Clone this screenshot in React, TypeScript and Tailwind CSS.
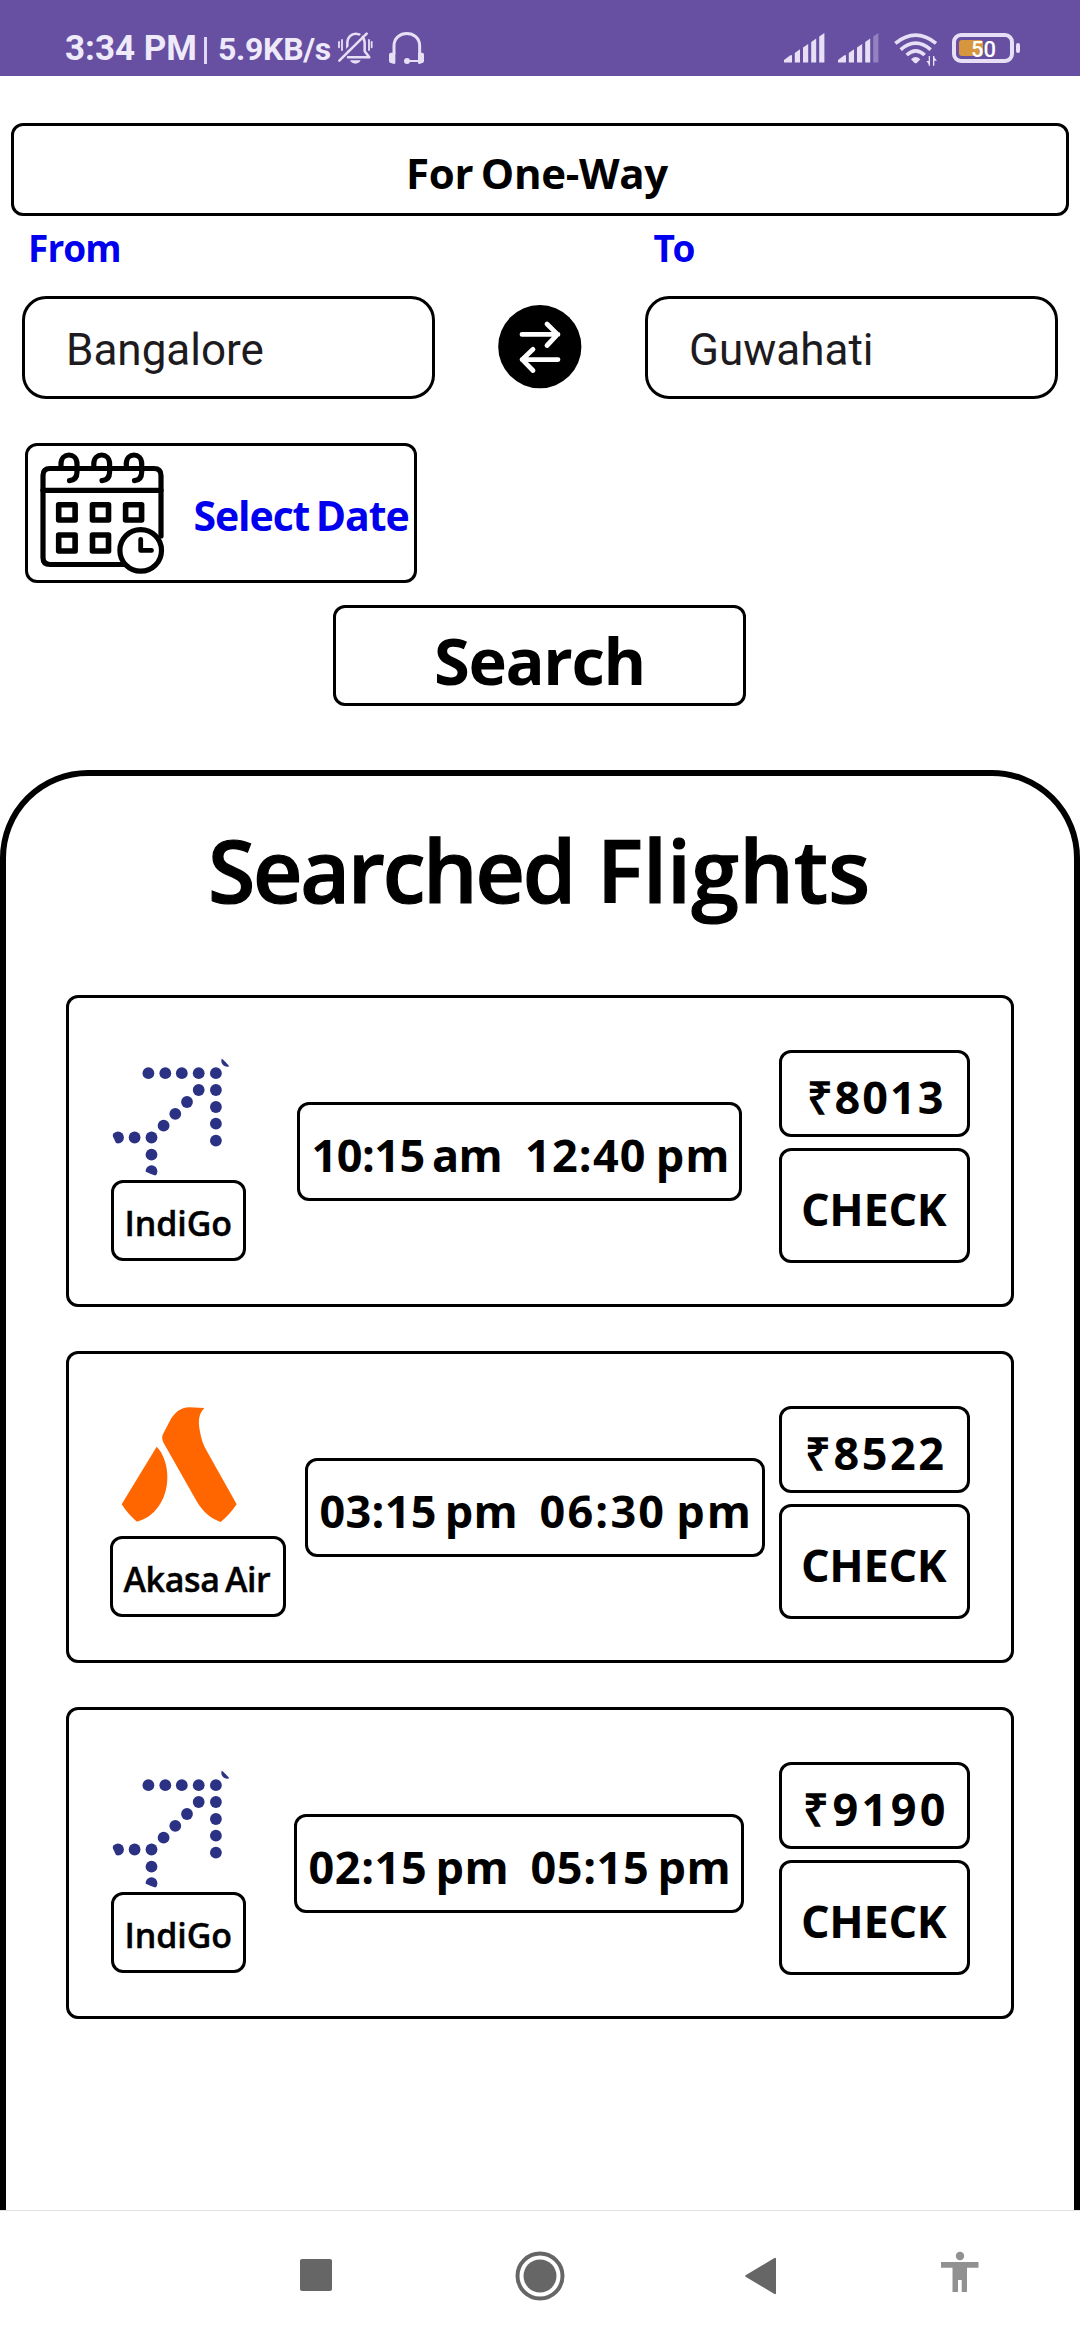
import React from "react";

type Flight = {
  airline: string;
  logo: React.ReactNode;
  nameClass: string;
  depart: string;
  departClass: string;
  arrive: string;
  arriveClass: string;
  boxClass: string;
  price: string;
  priceClass: string;
};

function IndigoLogo() {
  const dots = [
    [148.4, 1073.2], [165.3, 1073.2], [181.8, 1073.2], [198.7, 1073.2], [215.9, 1073.2],
    [215.9, 1090], [215.9, 1107], [215.9, 1123.7], [215.9, 1140.6],
    [198.7, 1090], [187, 1102], [175.3, 1113.8], [163.6, 1125.7], [151.5, 1137.5],
    [134.6, 1137.5], [118, 1137.5], [151.5, 1154.7], [151.5, 1171.2], [227.2, 1060.8],
  ];
  return (
    <svg className="h-[138px] w-[138px]" viewBox="107 1042 138 138">
      <clipPath id="round">
        <circle cx="176.6" cy="1110.3" r="68.8" />
      </clipPath>
      <g clipPath="url(#round)" fill="#2b3284">
        {dots.map(([x, y]) => (
          <circle key={`${x}-${y}`} cx={x} cy={y} r="5.9" />
        ))}
      </g>
    </svg>
  );
}

function AkasaLogo() {
  return (
    <svg className="h-[138px] w-[138px]" viewBox="141 174 414 414" fill="#ff6600">
      <path d="M308 284 L328 246 C342 218 362 202 388 202 L433 204 C417 222 413 240 420 275 C424 298 430 315 440 332 L530 493 Q510 523 482 546 C452 536 428 515 410 484 L314 314 Q303 297 308 284Z" />
      <path d="M290 320 C310 340 322 375 322 412 C322 478 284 532 231 545 Q204 523 185 493Z" />
    </svg>
  );
}

const flights: Flight[] = [
  {
    airline: "IndiGo",
    logo: <IndigoLogo />,
    nameClass: "ml-1 w-[135px] tracking-[-0.1px]",
    depart: "10:15 am",
    departClass: "w-[213.5px] tracking-[-0.5px]",
    arrive: "12:40 pm",
    arriveClass: "tracking-[1.2px]",
    boxClass: "ml-[51px] w-[445px]",
    price: "₹8013",
    priceClass: "pl-[24.5px] tracking-[2px]",
  },
  {
    airline: "Akasa Air",
    logo: <AkasaLogo />,
    nameClass: "ml-[3px] w-[176px] tracking-[-0.4px]",
    depart: "03:15 pm",
    departClass: "w-[220px] tracking-[0.3px]",
    arrive: "06:30 pm",
    arriveClass: "tracking-[2.2px]",
    boxClass: "ml-[19px] w-[460px]",
    price: "₹8522",
    priceClass: "pl-[23px] tracking-[2.5px]",
  },
  {
    airline: "IndiGo",
    logo: <IndigoLogo />,
    nameClass: "ml-1 w-[135px] tracking-[-0.1px]",
    depart: "02:15 pm",
    departClass: "w-[222px] tracking-[0.6px]",
    arrive: "05:15 pm",
    arriveClass: "tracking-[0.6px]",
    boxClass: "ml-[48px] w-[450px]",
    price: "₹9190",
    priceClass: "pl-[21px] tracking-[3.4px]",
  },
];

function SignalBars({ weak = false }: { weak?: boolean }) {
  return (
    <svg className="h-[30px] w-[41px]" viewBox="0 0 41 30" fill="#e6dff5">
      <path d="M0 29.5V27L6 22.5Q8 21.5 8 23V29.5Z" />
      <path d="M10.8 29.5V20L16 16.3V29.5Z" />
      <path d="M19 29.5V14.5L24.2 11V29.5Z" />
      <path d="M27.2 29.5V9L32.2 5.5V29.5Z" />
      <path d="M35.2 29.5V3.5L40.4 0V29.5Z" opacity={weak ? 0.35 : 1} />
    </svg>
  );
}

function StatusBar() {
  return (
    <header className="flex h-[76px] items-start bg-[#6750a2] font-['Roboto',sans-serif] text-[#efeafa]">
      <span className="mt-[31px] ml-[65px] w-[137px] text-[35px] leading-none font-bold whitespace-nowrap">3:34 PM</span>
      <span className="mt-[37px] ml-[2px] h-[27px] w-[3px] bg-[#e0d8f2]" />
      <span className="mt-[33px] ml-[11px] w-[120px] text-[32px] leading-none font-bold tracking-[-0.3px] whitespace-nowrap">5.9KB/s</span>
      <svg className="mt-[31px] h-[34px] w-[36px]" viewBox="26 33 108 102" fill="none" stroke="#e6dff5" strokeWidth="7.5" strokeLinecap="round" strokeLinejoin="round">
        <path d="M54 92V70C54 32 104 32 106 68V94L120 112H56" />
        <path d="M29 66V82M38 60V90M119 60V90M127 66V82" strokeWidth="5.5" />
        <path d="M26 116L106 36" stroke="#6750a2" strokeWidth="7" />
        <path d="M30 122L112 41" />
        <path d="M62 121H94Q89 131 78 131Q67 131 62 121Z" fill="#e6dff5" stroke="none" />
      </svg>
      <svg className="mt-[31px] ml-[14px] h-[34px] w-[37px]" viewBox="174 33 111 102" fill="none" stroke="#e6dff5" strokeWidth="9">
        <path d="M192 102V78C192 28 269 28 269 78V102" />
        <path d="M182 98H196V130Q193 133 190 131L180 128Q177 126 177 122V104Q177 99 182 98Z" fill="#e6dff5" stroke="none" />
        <path d="M278 98H264V130Q267 133 270 131L279 128Q282 126 282 122V104Q282 99 278 98Z" fill="#e6dff5" stroke="none" />
        <path d="M232 123H268" strokeWidth="6" />
        <circle cx="231" cy="123" r="9" fill="#e6dff5" stroke="none" />
      </svg>
      <div className="mt-[33px] mr-[60px] ml-auto flex items-start">
        <SignalBars />
        <div className="w-[13px]" />
        <SignalBars weak />
        <svg className="-mt-px ml-[15px] h-[36px] w-[45px]" viewBox="40 36 135 108" fill="none" stroke="#e6dff5" strokeWidth="11">
          <path d="M44 70Q105 21 166 70" />
          <path d="M60 89Q105 50 150 89" />
          <path d="M78 105Q105 80 132 105" />
          <path d="M91 118Q105 104 119 118L109 128Q105 131 101 128Z" fill="#e6dff5" stroke="none" />
          <path d="M146 108V137M159 137V108" strokeWidth="4" />
          <path d="M137 123L148 137V123ZM157 108L169 122H157Z" fill="#e6dff5" stroke="none" />
        </svg>
        <div className="relative ml-[13px] h-[30px] w-[62px] rounded-[9px] border-4 border-[#e6dff5] p-[3px]">
          <div className="h-[16px] w-[24px] rounded-[3px] bg-[#d8963c]" />
          <span className="absolute top-0 left-[15px] text-[22px] leading-[25px] font-medium text-white">50</span>
        </div>
        <div className="mt-[10px] ml-[2px] h-[10px] w-[4px] rounded-[2px] bg-[#e6dff5]" />
      </div>
    </header>
  );
}

function SwapIcon() {
  return (
    <svg className="h-[84px] w-[84px]" viewBox="498 305 84 84" fill="none" stroke="#fff" strokeWidth="4.8" strokeLinecap="round" strokeLinejoin="round">
      <circle cx="539.8" cy="346.7" r="41.6" fill="#000" stroke="none" />
      <path d="M522 334.4H558M547 324L557.5 334.4L547 345.5M558 359.6H522M533 349.3L522.3 359.6L533 370.5" />
    </svg>
  );
}

function CalendarIcon() {
  return (
    <svg className="h-[126px] w-[126px]" viewBox="39 450 126 126" fill="none" stroke="#000" strokeWidth="5.2" strokeLinecap="round" strokeLinejoin="round">
      <path d="M125 564.5H50Q43 564.5 43 557.5V475.5Q43 468.5 50 468.5H154Q161 468.5 161 475.5V536" />
      <path d="M43 490.3H161" />
      <path d="M61 468V464C61 452 77 452 77 464V472Q77 480 69.5 480.7" />
      <path d="M93.8 468V464C93.8 452 109.6 452 109.6 464V472Q109.6 480 102 480.7" />
      <path d="M126.3 468V464C126.3 452 141.7 452 141.7 464V472Q141.7 480 134.5 480.7" />
      <g strokeWidth="5.6">
        <rect x="58.7" y="504.8" width="16.4" height="15.2" />
        <rect x="92.5" y="504.8" width="16" height="15.2" />
        <rect x="125.6" y="504.8" width="16" height="15.2" />
        <rect x="58.7" y="535" width="16.4" height="16" />
        <rect x="92.5" y="535" width="16" height="16" />
      </g>
      <circle cx="140.7" cy="550.4" r="20.8" fill="#fff" />
      <path d="M140.7 539.5V550.4H151.5" strokeWidth="4.8" />
    </svg>
  );
}

function FlightCard({ f }: { f: Flight }) {
  return (
    <article className="flex h-[312px] items-start rounded-[12px] border-[3px] border-black pr-[41px] pl-[38px]">
      <div className="mt-[44px] flex flex-col items-start">
        {f.logo}
        <div className={`h-[81px] rounded-[12px] border-[3px] border-black pt-[23px] pl-[10.5px] text-[34px] leading-none font-semibold whitespace-nowrap [-webkit-text-stroke:0.4px_black] [word-spacing:-3px] ${f.nameClass}`}>{f.airline}</div>
      </div>
      <div className={`mt-[104px] flex h-[99px] items-start rounded-[12px] border-[3px] border-black pt-[27px] pl-[11.5px] text-[45px] leading-none whitespace-nowrap [word-spacing:-4px] ${f.boxClass}`}>
        <span className={`shrink-0 ${f.departClass}`}>{f.depart}</span>
        <span className={f.arriveClass}>{f.arrive}</span>
      </div>
      <div className="mt-[52px] ml-auto flex w-[191px] flex-col gap-[11px] text-[45px] leading-none whitespace-nowrap">
        <div className={`h-[87px] rounded-[12px] border-[3px] border-black pt-[20.5px] ${f.priceClass}`}>{f.price}</div>
        <button className="flex h-[115px] items-start rounded-[12px] border-[3px] border-black pt-[35px] pl-[19px] tracking-[-0.3px]">CHECK</button>
      </div>
    </article>
  );
}

function NavBar() {
  return (
    <nav className="flex h-[130px] items-start border-t border-[#e2e2e2] bg-white">
      <div className="mt-[48px] ml-[300px] h-[32px] w-[32px] rounded-[2px] bg-[#666]" />
      <svg className="mt-[40px] ml-[183px] h-[50px] w-[50px]" viewBox="0 0 50 50">
        <circle cx="25" cy="25" r="22.5" fill="none" stroke="#666" strokeWidth="4" />
        <circle cx="25" cy="25" r="16.5" fill="#666" />
      </svg>
      <svg className="mt-[46px] ml-[180px] h-[38px] w-[31px]" viewBox="0 0 31 38">
        <path d="M29 1.2Q31 0 31 2V36Q31 38 29 36.8L1 20Q-.5 19 1 18Z" fill="#666" />
      </svg>
      <svg className="mt-[40px] ml-[165px] h-[42px] w-[38px]" viewBox="0 0 38 42" fill="#919191">
        <circle cx="19" cy="5" r="4.2" />
        <path d="M0 11H37.5V16.7H26V41H20.7V29H17V41H11.5V16.7H0Z" />
      </svg>
    </nav>
  );
}

export default function App() {
  return (
    <div className="flex h-[2340px] w-[1080px] flex-col overflow-hidden bg-white font-['Open_Sans',sans-serif] font-bold text-black">
      <StatusBar />
      <main className="flex h-[2134px] flex-col overflow-hidden pt-[47px]">
        <div className="mx-[11px] h-[93px] shrink-0 rounded-[12px] border-[3px] border-black pt-[26px] pl-[392px] text-[42px] leading-none tracking-[-0.3px] whitespace-nowrap [word-spacing:-3px]">For One-Way</div>
        <div className="mt-[13px] flex shrink-0 pl-[28px] text-[37px] leading-none text-[#0000ee]">
          <span className="w-[625.5px] tracking-[-0.9px]">From</span>
          <span className="tracking-[-2.5px]">To</span>
        </div>
        <div className="mt-[30px] flex shrink-0 items-start justify-between px-[22px] font-['Roboto',sans-serif] text-[44px] leading-none font-normal text-[#1d1b20]">
          <div className="h-[103px] w-[413px] rounded-[24px] border-[3px] border-black pt-[29px] pl-[41px]">Bangalore</div>
          <div className="pt-[9px]"><SwapIcon /></div>
          <div className="h-[103px] w-[413px] rounded-[24px] border-[3px] border-black pt-[29px] pl-[41px]">Guwahati</div>
        </div>
        <div className="mt-[44px] ml-[25px] flex h-[140px] w-[392px] shrink-0 items-start rounded-[12px] border-[3px] border-black pt-[4px] pl-[11px]">
          <CalendarIcon />
          <span className="mt-[45px] ml-[28.5px] text-[41px] leading-none tracking-[-1.1px] whitespace-nowrap text-[#0000ee] [word-spacing:-3px]">Select Date</span>
        </div>
        <button className="mt-[22px] ml-[333px] flex h-[101px] w-[413px] shrink-0 items-start rounded-[12px] border-[3px] border-black pt-[20px] pl-[98px] text-[65px] leading-none tracking-[-1.4px]">Search</button>
        <section className="mt-[64px] h-[1700px] shrink-0 rounded-t-[88px] border-[6px] border-black px-[60px]">
          <h1 className="h-[219px] pt-[51px] pl-[142px] text-[86px] leading-none font-semibold whitespace-pre [-webkit-text-stroke:1.2px_black]">
            <span className="tracking-[-2.3px] [word-spacing:3px]">Searched </span>
            <span className="tracking-[0.2px]">Flights</span>
          </h1>
          <div className="flex flex-col gap-[44px]">
            {flights.map((f, i) => (
              <FlightCard key={i} f={f} />
            ))}
          </div>
        </section>
      </main>
      <NavBar />
    </div>
  );
}
